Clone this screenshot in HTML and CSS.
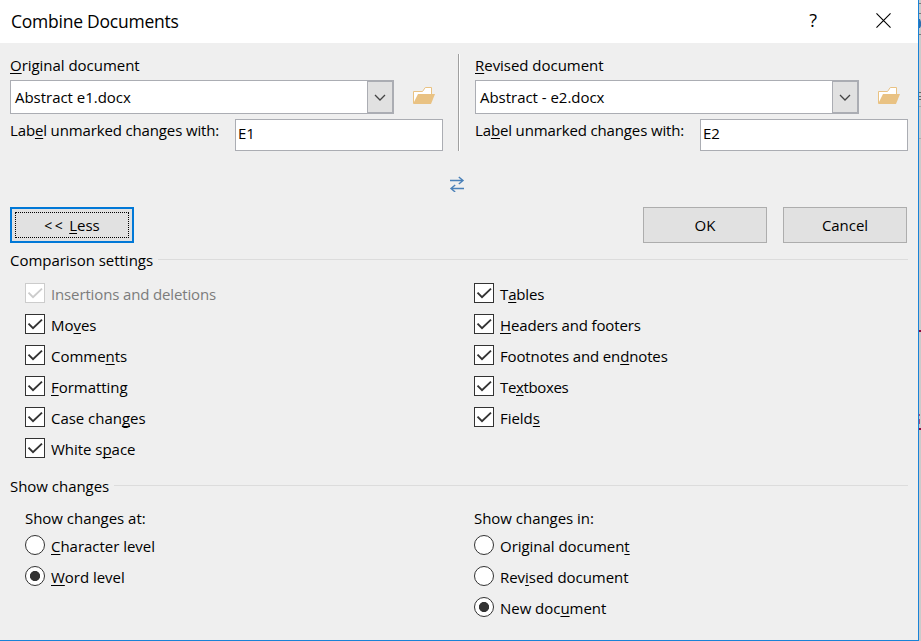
FILE: index.html
```html
<!DOCTYPE html>
<html lang="en">
<head>
<meta charset="utf-8">
<title>Combine Documents</title>
<link rel="stylesheet" href="styles.css">
</head>
<body>
<svg class="defs" aria-hidden="true">
  <symbol id="check" viewBox="0 0 18 18"><path d="M2.5 8.7 L7 13.2 L16 4.6" fill="none" stroke="currentColor" stroke-width="1.9"/></symbol>
  <symbol id="chevron" viewBox="0 0 12 7"><path d="M1 1 L6 6 L11 1" fill="none" stroke="#444" stroke-width="1.3"/></symbol>
  <symbol id="folder" viewBox="0 0 22 18">
    <path d="M.5 16 V4.5 H9.5 L12.3 .5 H18.5 V8" fill="#fff" stroke="#e9c283"/>
    <path d="M0 17 L5 7 H22 L18 17 Z" fill="#e9c283"/>
  </symbol>
</svg>
<main class="dialog">
  <header class="titlebar">
    <h1 class="title">Combine Documents</h1>
    <span class="help">?</span>
    <svg class="close" viewBox="0 0 16 16"><path d="M.5 .5 L15.5 15.5 M15.5 .5 L.5 15.5" stroke="#000" stroke-width="1.2"/></svg>
  </header>
  <section class="documents">
    <div class="panel">
      <div class="line"><span><u>O</u>riginal document</span></div>
      <div class="picker">
        <div class="combo"><span class="value">Abstract e1.docx</span><span class="drop"><svg><use href="#chevron"/></svg></span></div>
        <svg class="folder"><use href="#folder"/></svg>
      </div>
      <div class="labelrow"><span class="tight">Lab<u>e</u>l unmarked changes with:</span><div class="field">E1</div></div>
    </div>
    <div class="divider"></div>
    <div class="panel">
      <div class="line"><span><u>R</u>evised document</span></div>
      <div class="picker">
        <div class="combo"><span class="value">Abstract - e2.docx</span><span class="drop"><svg><use href="#chevron"/></svg></span></div>
        <svg class="folder"><use href="#folder"/></svg>
      </div>
      <div class="labelrow"><span class="tight">La<u>b</u>el unmarked changes with:</span><div class="field">E2</div></div>
    </div>
  </section>
  <div class="swap"><svg viewBox="0 0 16 16"><path d="M1 4.5 H14 M9.8 1 L14 4.5 L9.8 8 M15 12.5 H2 M6.2 9 L2 12.5 L6.2 16" fill="none" stroke="#4a80b8" stroke-width="1.4"/></svg></div>
  <div class="actions">
    <div class="button focused"><span class="focus"><span class="arrows">&lt;&lt;</span> <u>L</u>ess</span></div>
    <div class="button ok">OK</div>
    <div class="button">Cancel</div>
  </div>
  <div class="legend"><span>Comparison settings</span></div>
  <section class="settings">
    <div class="options">
      <div class="option disabled"><svg class="box"><use href="#check"/></svg><span class="tight">Insertions and deletions</span></div>
      <div class="option"><svg class="box"><use href="#check"/></svg><span>Mo<u>v</u>es</span></div>
      <div class="option"><svg class="box"><use href="#check"/></svg><span>Comme<u>n</u>ts</span></div>
      <div class="option"><svg class="box"><use href="#check"/></svg><span><u>F</u>ormatting</span></div>
      <div class="option"><svg class="box"><use href="#check"/></svg><span>Case chan<u>g</u>es</span></div>
      <div class="option"><svg class="box"><use href="#check"/></svg><span>White s<u>p</u>ace</span></div>
    </div>
    <div class="options">
      <div class="option"><svg class="box"><use href="#check"/></svg><span class="tight">T<u>a</u>bles</span></div>
      <div class="option"><svg class="box"><use href="#check"/></svg><span class="tight"><u>H</u>eaders and footers</span></div>
      <div class="option"><svg class="box"><use href="#check"/></svg><span class="tight">Footnotes and en<u>d</u>notes</span></div>
      <div class="option"><svg class="box"><use href="#check"/></svg><span class="tighter">Te<u>x</u>tboxes</span></div>
      <div class="option"><svg class="box"><use href="#check"/></svg><span>Field<u>s</u></span></div>
    </div>
  </section>
  <div class="legend"><span>Show changes</span></div>
  <section class="settings show">
    <div>
      <div class="caption">Show changes at:</div>
      <div class="options">
        <div class="option"><i class="radio"></i><span><u>C</u>haracter level</span></div>
        <div class="option"><i class="radio on"></i><span><u>W</u>ord level</span></div>
      </div>
    </div>
    <div>
      <div class="caption">Show changes in:</div>
      <div class="options">
        <div class="option"><i class="radio"></i><span>Original documen<u>t</u></span></div>
        <div class="option"><i class="radio"></i><span>Rev<u>i</u>sed document</span></div>
        <div class="option"><i class="radio on"></i><span>New doc<u>u</u>ment</span></div>
      </div>
    </div>
  </section>
</main>
<aside class="behind">
  <svg viewBox="0 0 2 641"><path d="M0 3.5H2M0 13.5H2M0 34.5H2" stroke="#777"/><path d="M0 19H1L2 22V26L1 28H0Z" fill="#2f6fae"/><path d="M0 92.5H2M0 96.5H2M0 99.5H2" stroke="#666"/><path d="M0 106.5H2M0 138.5H2" stroke="#aaa"/><path d="M0 331H2M0 429H2" stroke="#8c0a3c" stroke-width="2"/><path d="M.5 414V416M.5 419V424" stroke="#a8507c"/></svg>
</aside>
</body>
</html>
```

FILE: styles.css
```css
* { box-sizing: border-box; }
body {
  margin: 0;
  width: 921px;
  height: 641px;
  overflow: hidden;
  display: flex;
  background: #cbcbcb;
  color: #000;
  font: 15px/20px "Open Sans", "Noto Sans", sans-serif;
  letter-spacing: -.03px;
  white-space: nowrap;
}
svg { display: block; }
.defs { display: none; }
u { text-decoration: underline 1px; text-underline-offset: 2px; text-decoration-skip-ink: none; }
.tight { letter-spacing: -.14px; }
.tighter { letter-spacing: -.35px; }
.dialog {
  width: 919px;
  height: 641px;
  flex: none;
  background: #efefef;
  border-right: 1px solid #1883d7;
  border-bottom: 1px solid #1883d7;
}
.behind { width: 2px; height: 641px; }
.behind svg { width: 2px; height: 641px; }
.titlebar {
  height: 43px;
  background: #fff;
  display: flex;
  align-items: flex-start;
  padding: 9px 27px 0 11px;
}
.title { margin: 0; flex: 1; font-size: 17.5px; line-height: 24px; font-weight: 400; letter-spacing: -.24px; }
.help { font-size: 18px; line-height: 24px; margin: -1px 59px 0 0; }
.close { width: 15px; height: 15px; margin-top: 4px; }
.documents { display: flex; padding: 11px 10px 0; height: 108px; }
.panel { width: 433px; padding-top: 1px; }
.divider { width: 2px; height: 97px; margin: 0 15px; background: #a0a0a0; border-right: 1px solid #fff; }
.line { height: 25px; }
.picker { display: flex; align-items: center; height: 34px; }
.combo {
  width: 384px; height: 34px; display: flex; align-items: stretch;
  background: #fff; border: 1px solid #abadb3;
}
.value { flex: 1; padding: 6px 0 0 4px; }
.drop {
  width: 26px; background: #e1e1e1; border: 1px solid #abadb3;
  display: flex; align-items: center; justify-content: center; padding-right: 1px;
}
.drop svg { width: 12px; height: 7px; }
.folder { width: 22px; height: 18px; margin: -2px 0 0 19px; }
.labelrow { display: flex; justify-content: space-between; margin-top: 5px; }
.labelrow span { padding-top: 1px; }
.field { width: 208px; height: 32px; background: #fff; border: 1px solid #abadb3; padding: 3px 0 0 2px; }
.swap { height: 56px; padding: 25px 0 0 449px; }
.swap svg { width: 16px; height: 16px; }
.actions { display: flex; gap: 16px; padding: 0 11px 0 10px; }
.button {
  width: 124px; height: 36px; background: #e1e1e1; border: 1px solid #adadad;
  display: flex; align-items: center; justify-content: center;
}
.focused { border: 2px solid #0078d7; padding: 3px; }
.focus { flex: 1; height: 26px; border: 1px dotted #000; text-align: center; line-height: 24px; }
.arrows { font-size: 14px; letter-spacing: 2.5px; }
.ok { margin-left: auto; }
.legend { display: flex; padding: 0 10px; margin-top: 7px; height: 20px; }
.legend::after { content: ""; flex: 1; height: 1px; margin: 9px 0 0 5px; background: #dcdcdc; }
.settings { display: grid; grid-template-columns: 449px 1fr; padding: 13px 0 0 25px; height: 199px; }
.options { display: flex; flex-direction: column; gap: 11px; }
.option { display: flex; gap: 6px; height: 20px; }
.option span { padding-top: 1px; }
.box { width: 20px; height: 20px; border: 1px solid #333; background: #fff; color: #333; }
.disabled { color: #7c7c7c; }
.disabled .box { border-color: #ccc; color: #ccc; }
.show { padding-top: 12px; height: 140px; }
.caption { height: 27px; }
.radio { width: 20px; height: 20px; border: 1px solid #333; border-radius: 50%; background: #fff; }
.radio.on { background: radial-gradient(circle at center, #333 0 4.7px, #fff 5.4px); }
```
